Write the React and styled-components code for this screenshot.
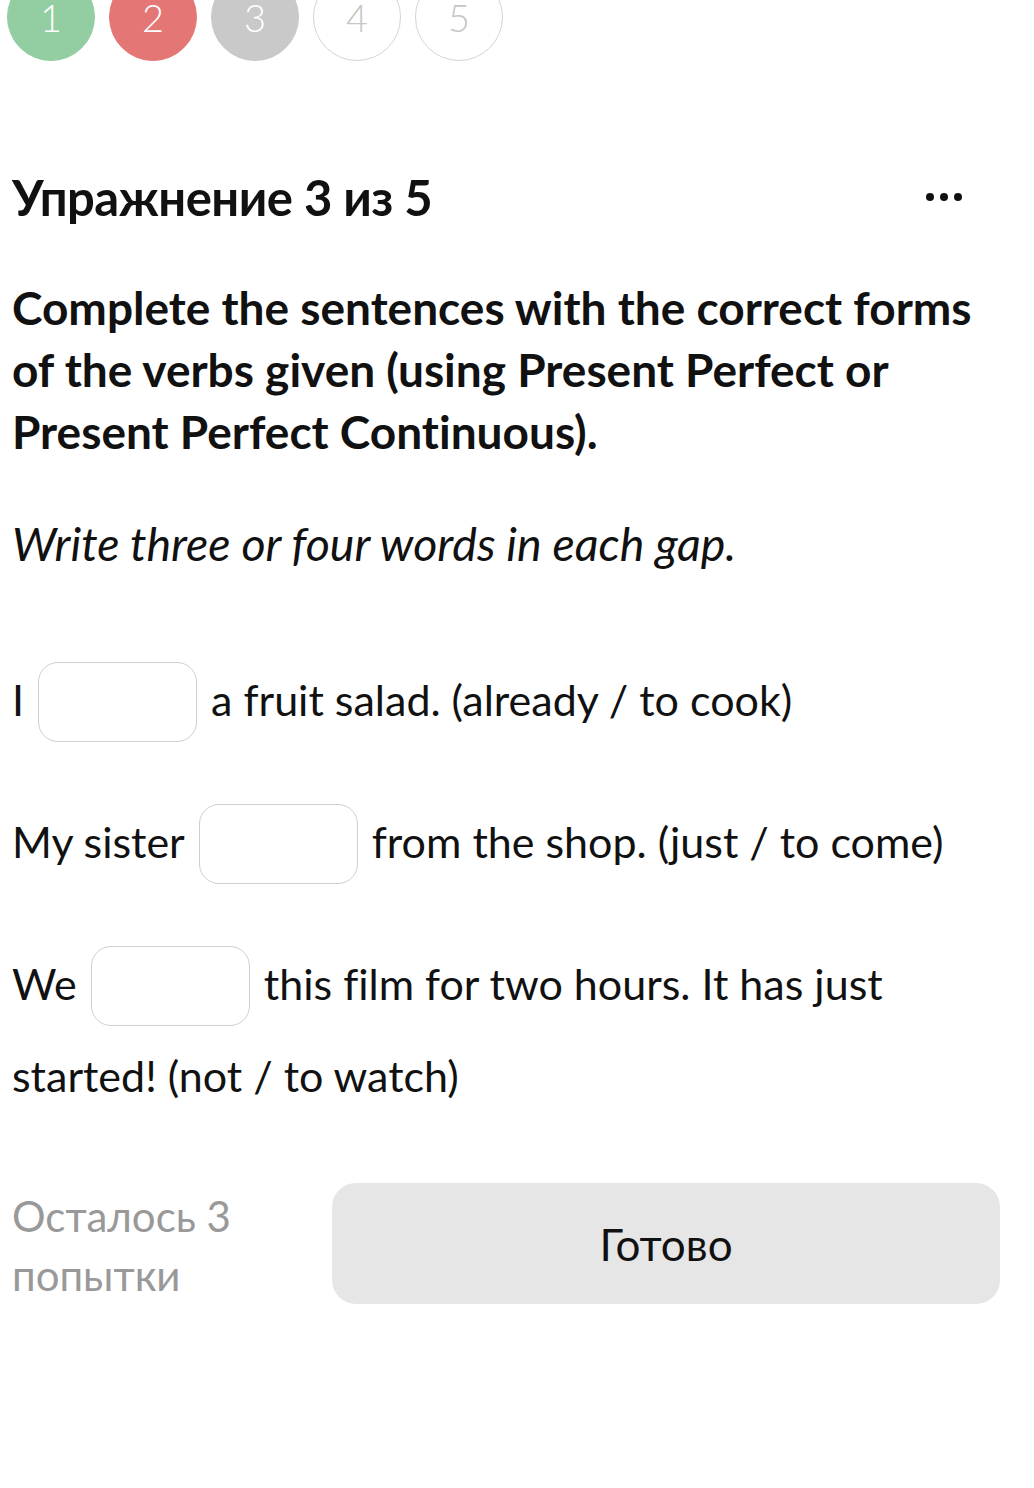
import React from 'react';
import styled, { createGlobalStyle } from 'styled-components';

const GlobalStyle = createGlobalStyle`
  body {
    margin: 0;
    background: #fff;
    font-family: Lato, "Noto Sans", sans-serif;
    font-variant-ligatures: none;
    color: #111;
    overflow: hidden;
  }
`;

const Page = styled.div`
  padding: 0 34px 0 12px;
`;

const Steps = styled.div`
  display: flex;
  gap: 14px;
  margin: -27px 0 0 -5px;
`;

const STEP_COLORS = {
  done: { bg: '#92cea1', border: '#92cea1', color: '#fff' },
  failed: { bg: '#e57676', border: '#e57676', color: '#fff' },
  current: { bg: '#c9c9c9', border: '#c9c9c9', color: '#fff' },
  todo: { bg: '#fff', border: '#d4d4d4', color: '#c6c6c6' },
};

const Step = styled.div`
  width: 88px;
  height: 88px;
  box-sizing: border-box;
  border-radius: 50%;
  display: flex;
  align-items: center;
  justify-content: center;
  font-size: 38px;
  font-weight: 300;
  background: ${p => STEP_COLORS[p.$state].bg};
  border: 1.5px solid ${p => STEP_COLORS[p.$state].border};
  color: ${p => STEP_COLORS[p.$state].color};
`;

const Header = styled.div`
  display: flex;
  justify-content: space-between;
  align-items: center;
  margin-top: 106px;
  height: 60px;
`;

const Title = styled.h1`
  margin: 0;
  font-size: 49px;
  font-weight: 700;
  line-height: 60px;
  letter-spacing: -0.5px;
`;

const Dots = styled.div`
  display: flex;
  gap: 6px;
  margin-right: 38px;
  span {
    width: 8px;
    height: 8px;
    border-radius: 50%;
    background: #111;
  }
`;

const Task = styled.p`
  margin: 50px 0 0;
  font-size: 46px;
  font-weight: 700;
  line-height: 62px;
`;

const Hint = styled.p`
  margin: 49px 0 0;
  font-size: 46.5px;
  font-style: italic;
  line-height: 62px;
`;

const Sentences = styled.div`
  display: flex;
  flex-direction: column;
  gap: 50px;
  margin-top: 80px;
`;

const Sentence = styled.div`
  font-size: 43px;
  line-height: 92px;
`;

const Gap = styled.span`
  display: inline-block;
  vertical-align: middle;
  width: 159px;
  height: 80px;
  box-sizing: border-box;
  margin: -6px 14px 0;
  border: 1.5px solid #cfcfcf;
  border-radius: 20px;
  background: #fff;
`;

const Footer = styled.div`
  display: flex;
  align-items: flex-start;
  margin-top: 61px;
`;

const Attempts = styled.div`
  flex: 0 0 320px;
  padding-top: 4px;
  font-size: 42px;
  line-height: 59px;
  color: #999;
`;

const Done = styled.button`
  flex: 1;
  height: 121px;
  border: none;
  border-radius: 24px;
  background: #e6e6e6;
  font-family: inherit;
  font-size: 44px;
  color: #111;
`;

const steps = ['done', 'failed', 'current', 'todo', 'todo'];

const sentences = [
  ['I', 'a fruit salad. (already / to cook)'],
  ['My sister', 'from the shop. (just / to come)'],
  ['We', 'this film for two hours. It has just started! (not / to watch)'],
];

const App = () => (
  <>
    <GlobalStyle />
    <Page>
      <Steps>
        {steps.map((s, i) => (
          <Step key={i} $state={s}>{i + 1}</Step>
        ))}
      </Steps>
      <Header>
        <Title>Упражнение 3 из 5</Title>
        <Dots><span /><span /><span /></Dots>
      </Header>
      <Task>
        Complete the sentences with the correct forms of the verbs given (using Present Perfect or Present Perfect Continuous).
      </Task>
      <Hint>Write three or four words in each gap.</Hint>
      <Sentences>
        {sentences.map(([before, after], i) => (
          <Sentence key={i}>
            {before}<Gap />{after}
          </Sentence>
        ))}
      </Sentences>
      <Footer>
        <Attempts>Осталось 3 попытки</Attempts>
        <Done>Готово</Done>
      </Footer>
    </Page>
  </>
);

export default App;
